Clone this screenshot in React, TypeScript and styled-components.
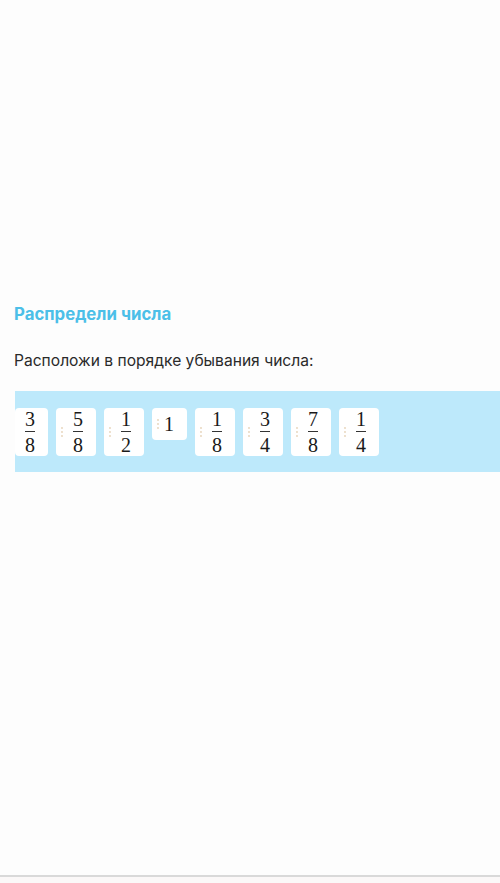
import React from "react";
import styled, { createGlobalStyle } from "styled-components";

const Global = createGlobalStyle`
  html, body { margin: 0; padding: 0; background: #fdfdfd; }
  body { font-family: Inter, "Noto Sans", sans-serif; }
`;

const Page = styled.div`
  width: 500px;
  height: 883px;
  display: flex;
  flex-direction: column;
  overflow: hidden;
  background: #fdfdfd;
`;

const Content = styled.main`
  flex: 1;
  padding-top: 303px;
  display: flex;
  flex-direction: column;
`;

const Title = styled.h2`
  margin: 0 0 0 14px;
  font-family: Inter, "Noto Sans", sans-serif;
  font-size: 16.8px;
  line-height: 22px;
  font-weight: 700;
  color: #4cbfe8;
`;

const Prompt = styled.p`
  margin: 26px 0 0 14px;
  font-family: Inter, "Noto Sans", sans-serif;
  font-size: 15.6px;
  line-height: 20px;
  font-weight: 400;
  color: #2a2a2a;
`;

const Band = styled.div`
  margin: 20px 0 0 15px;
  height: 81px;
  background: #bde9fb;
  display: flex;
  align-items: flex-start;
  gap: 8px;
  padding-top: 17px;
  box-sizing: border-box;
`;

const Card = styled.div<{ $short?: boolean; $first?: boolean }>`
  background: #ffffff;
  border-radius: 4px;
  height: ${(p) => (p.$short ? "32px" : "48px")};
  width: ${(p) => (p.$first ? "33px" : p.$short ? "35px" : "40px")};
  box-sizing: border-box;
  display: flex;
  align-items: center;
  padding-left: ${(p) => (p.$first ? "8px" : "4px")};
  gap: ${(p) => (p.$short ? "4px" : "7px")};
`;

const Frac = styled.span`
  display: inline-flex;
  flex-direction: column;
  align-items: center;
  font-family: "Liberation Serif", "DejaVu Serif", serif;
  font-size: 20px;
  line-height: 18px;
  color: #1a1a1a;
  width: 14px;
`;

const Bar = styled.span`
  display: block;
  width: 10px;
  height: 1px;
  background: #333;
  margin: 3px 0 4px;
`;

const Whole = styled.span`
  font-family: "Liberation Serif", "DejaVu Serif", serif;
  font-size: 20px;
  line-height: 20px;
  color: #1a1a1a;
`;

const Footer = styled.footer`
  height: 6px;
  border-top: 2px solid #d9d9d9;
  background: #fbf8f8;
`;

const Handle = () => (
  <svg width="4" height="12" viewBox="0 0 4 12" aria-hidden>
    <circle cx="2" cy="2" r="0.9" fill="#e6d2b8" />
    <circle cx="2" cy="6" r="0.9" fill="#e6d2b8" />
    <circle cx="2" cy="10" r="0.9" fill="#e6d2b8" />
  </svg>
);

type Item = { n: number; d?: number };

const items: Item[] = [
  { n: 3, d: 8 },
  { n: 5, d: 8 },
  { n: 1, d: 2 },
  { n: 1 },
  { n: 1, d: 8 },
  { n: 3, d: 4 },
  { n: 7, d: 8 },
  { n: 1, d: 4 },
];

export default function App() {
  return (
    <Page>
      <Global />
      <Content>
        <Title>Распредели числа</Title>
        <Prompt>Расположи в порядке убывания числа:</Prompt>
        <Band>
          {items.map((it, i) =>
            it.d === undefined ? (
              <Card key={i} $short>
                <Handle />
                <Whole>{it.n}</Whole>
              </Card>
            ) : (
              <Card key={i} $first={i === 0}>
                {i !== 0 && <Handle />}
                <Frac>
                  <span>{it.n}</span>
                  <Bar />
                  <span>{it.d}</span>
                </Frac>
              </Card>
            )
          )}
        </Band>
      </Content>
      <Footer />
    </Page>
  );
}
